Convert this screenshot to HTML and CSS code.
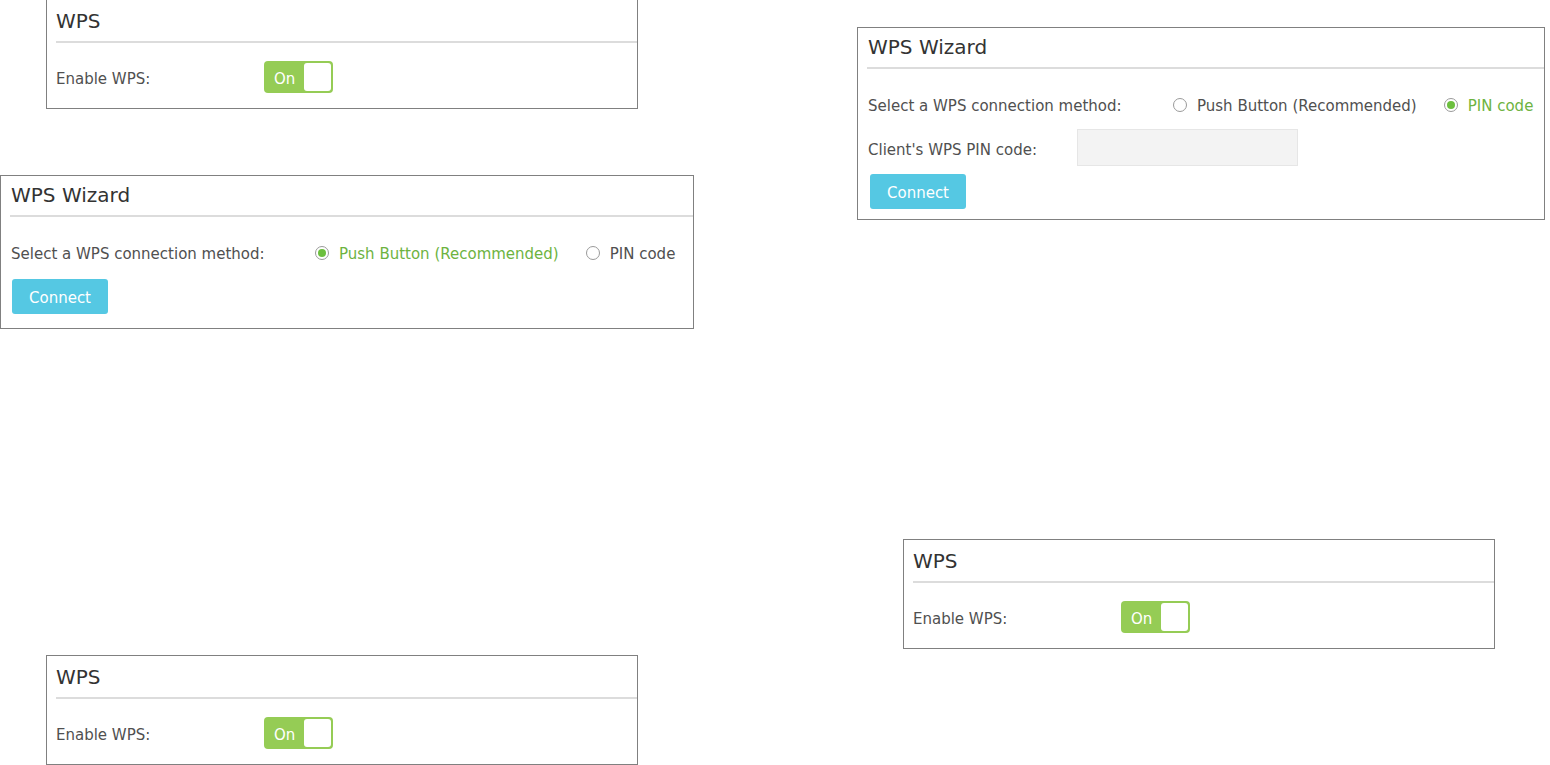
FILE: index.html
```html
<!DOCTYPE html>
<html>
<head>
<meta charset="utf-8">
<link rel="stylesheet" href="styles.css">
</head>
<body>
<div class="canvas">

  <section class="panel panel-wps p1">
    <div class="panel-head"><h2 class="title">WPS</h2></div>
    <div class="panel-body">
      <div class="row row-toggle">
        <span class="label label-toggle">Enable WPS:</span>
        <div class="toggle"><span class="toggle-text">On</span><span class="toggle-knob"></span></div>
      </div>
    </div>
  </section>

  <section class="panel panel-wizard p2">
    <div class="panel-head"><h2 class="title">WPS Wizard</h2></div>
    <div class="panel-body">
      <div class="row row-method">
        <span class="label label-method">Select a WPS connection method:</span>
        <div class="radios">
          <span class="radio checked"><span class="radio-circle"></span><span class="radio-text">Push Button (Recommended)</span></span>
          <span class="radio"><span class="radio-circle"></span><span class="radio-text">PIN code</span></span>
        </div>
      </div>
      <button class="btn btn-push">Connect</button>
    </div>
  </section>

  <section class="panel panel-wizard p3">
    <div class="panel-head"><h2 class="title">WPS Wizard</h2></div>
    <div class="panel-body">
      <div class="row row-method">
        <span class="label label-method">Select a WPS connection method:</span>
        <div class="radios">
          <span class="radio"><span class="radio-circle"></span><span class="radio-text">Push Button (Recommended)</span></span>
          <span class="radio checked"><span class="radio-circle"></span><span class="radio-text">PIN code</span></span>
        </div>
      </div>
      <div class="row row-pin">
        <span class="label label-pin">Client's WPS PIN code:</span>
        <input class="pin-input" type="text">
      </div>
      <button class="btn btn-pin">Connect</button>
    </div>
  </section>

  <section class="panel panel-wps p4">
    <div class="panel-head"><h2 class="title">WPS</h2></div>
    <div class="panel-body">
      <div class="row row-toggle">
        <span class="label label-toggle">Enable WPS:</span>
        <div class="toggle"><span class="toggle-text">On</span><span class="toggle-knob"></span></div>
      </div>
    </div>
  </section>

  <section class="panel panel-wps p5">
    <div class="panel-head"><h2 class="title">WPS</h2></div>
    <div class="panel-body">
      <div class="row row-toggle">
        <span class="label label-toggle">Enable WPS:</span>
        <div class="toggle"><span class="toggle-text">On</span><span class="toggle-knob"></span></div>
      </div>
    </div>
  </section>

</div>
</body>
</html>
```

FILE: styles.css
```css
* { box-sizing: border-box; }

html, body {
  margin: 0;
  padding: 0;
  background: #ffffff;
}

body {
  font-family: "DejaVu Sans", Verdana, sans-serif;
  font-size: 15px;
  color: #555555;
}

.canvas {
  position: relative;
  width: 1550px;
  height: 765px;
  overflow: hidden;
}

/* panels are screenshots placed on a free canvas */
.panel {
  position: absolute;
  background: #ffffff;
  border: 1px solid #808080;
}

.p1 { left: 46px; top: -1px; width: 592px; }
.p2 { left: 0; top: 175px; width: 694px; }
.p3 { left: 857px; top: 27px; width: 688px; }
.p4 { left: 903px; top: 539px; width: 592px; }
.p5 { left: 46px; top: 655px; width: 592px; }

.panel-head {
  margin-left: 9px;
  border-bottom: 2px solid #dcdcdc;
}

.title {
  margin: 0;
  font-size: 20px;
  font-weight: normal;
  line-height: 24px;
  color: #333333;
}

.panel-wps .panel-head { padding-top: 9px; padding-bottom: 8px; }
.panel-wps .panel-body { padding: 18px 0 15px 9px; }

.panel-wizard .panel-head { padding-top: 7px; padding-bottom: 8px; }
.panel-wizard .title { padding-left: 1px; }
.panel-wizard .panel-body { padding: 17px 0 0 9px; }
.p2 .panel-body { padding-bottom: 14px; }
.p3 .panel-body { padding-left: 10px; padding-bottom: 10px; }

.row {
  display: flex;
  align-items: center;
  white-space: nowrap;
}

.label {
  flex: none;
  color: #505050;
  padding-top: 4px;
}

.row-toggle { height: 32px; }
.label-toggle { width: 208px; }

.row-method { height: 36px; }
.p2 .label-method { width: 305px; padding-left: 1px; }
.p3 .label-method { width: 305px; }

.row-pin { margin-top: 7px; height: 37px; }
.label-pin { width: 209px; }

.toggle {
  flex: none;
  width: 69px;
  height: 32px;
  background: #95cc55;
  border-radius: 4px;
  padding: 2px;
  display: flex;
  align-items: center;
  justify-content: space-between;
}

.toggle-text {
  color: #ffffff;
  padding-left: 8px;
  padding-top: 4px;
  font-size: 15px;
}

.toggle-knob {
  width: 27px;
  height: 28px;
  background: #ffffff;
  border-radius: 3px;
}

.radios {
  flex: none;
  display: flex;
  align-items: center;
  padding-top: 2px;
}

.radio {
  flex: none;
  display: flex;
  align-items: center;
  margin-right: 27px;
  color: #505050;
  white-space: nowrap;
}

.radio-text { padding-top: 2px; }

.radio-circle {
  flex: none;
  width: 14px;
  height: 14px;
  border: 1px solid #9a9a9a;
  border-radius: 50%;
  margin-right: 10px;
  display: flex;
  align-items: center;
  justify-content: center;
  background: #ffffff;
}

.radio.checked .radio-text { color: #6db33f; }
.radio.checked .radio-circle::after {
  content: "";
  width: 8px;
  height: 8px;
  border-radius: 50%;
  background: #6cbf3e;
}

.pin-input {
  flex: none;
  width: 221px;
  height: 37px;
  background: #f3f3f3;
  border: 1px solid #e6e6e6;
  margin: 0;
  padding: 0 8px;
  font: inherit;
  outline: none;
}

.btn {
  display: block;
  width: 96px;
  height: 35px;
  margin: 0;
  border: none;
  border-radius: 3px;
  background: #55c8e3;
  color: #ffffff;
  font-family: "DejaVu Sans", Verdana, sans-serif;
  font-size: 15px;
  padding: 3px 0 0;
}

.btn-push { margin-top: 9px; margin-left: 2px; }
.btn-pin { margin-top: 8px; margin-left: 2px; }
```
